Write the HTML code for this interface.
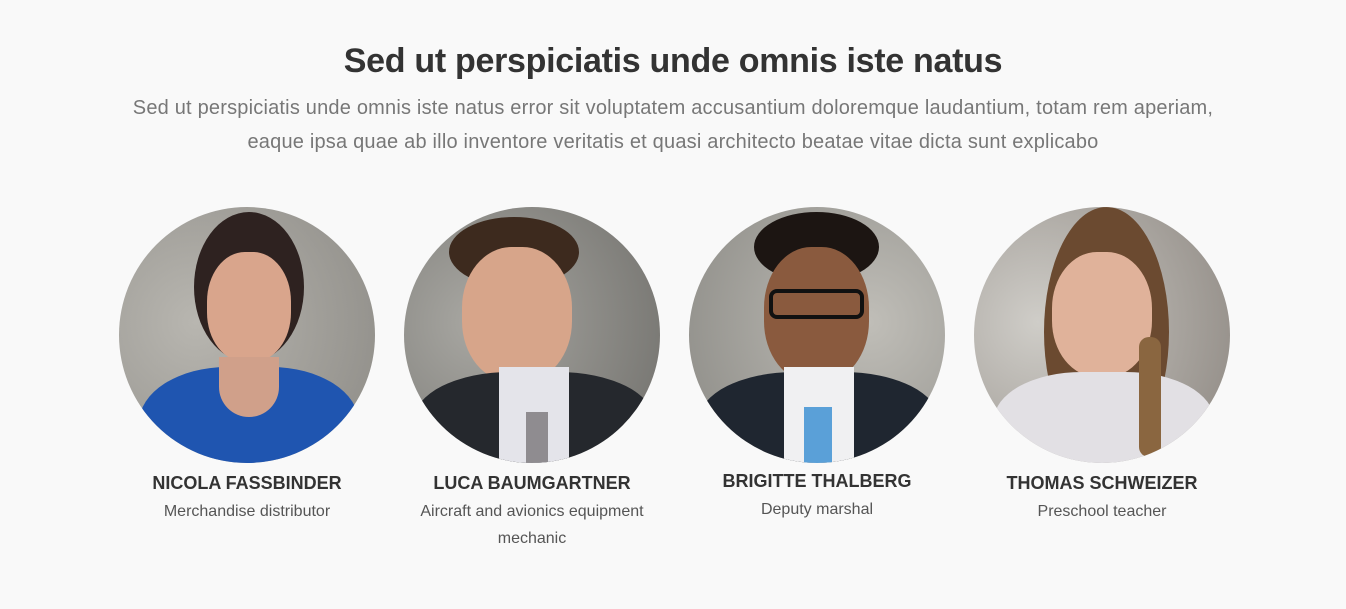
<!DOCTYPE html>
<html><head><meta charset="utf-8"><style>
body{margin:0;width:1346px;height:609px;background:#f9f9f9;font-family:"Liberation Sans",sans-serif;overflow:hidden;position:relative}
h1{position:absolute;top:42px;left:0;width:1346px;text-align:center;margin:0;font-size:34px;font-weight:bold;color:#333;letter-spacing:-0.3px}
.sub{position:absolute;top:91px;left:0;width:1346px;text-align:center;font-size:20px;line-height:34px;color:#777;font-weight:300;white-space:nowrap;letter-spacing:0.2px}
.m{position:absolute;top:207px;width:256px;text-align:center}
.c{width:256px;height:256px;border-radius:50%;position:relative;overflow:hidden}
.c div{position:absolute}
.n{font-size:18px;font-weight:bold;color:#333;margin-top:10px}
.r{font-size:16px;color:#555;line-height:27px;margin-top:4px}
</style></head><body>
<h1>Sed ut perspiciatis unde omnis iste natus</h1>
<div class="sub">Sed ut perspiciatis unde omnis iste natus error sit voluptatem accusantium doloremque laudantium, totam rem aperiam,<br>eaque ipsa quae ab illo inventore veritatis et quasi architecto beatae vitae dicta sunt explicabo</div>

<div class="m" style="left:119px"><div class="c" style="background:radial-gradient(circle at 30% 45%,#b8b6b0,#8c8a85)">
<div style="left:75px;top:5px;width:110px;height:150px;border-radius:50%;background:#2e2220"></div>
<div style="left:88px;top:45px;width:84px;height:110px;border-radius:45%;background:#d9a58c"></div>
<div style="left:20px;top:160px;width:220px;height:140px;border-radius:40% 40% 0 0;background:#1f55b0"></div>
<div style="left:100px;top:150px;width:60px;height:60px;border-radius:0 0 50% 50%;background:#d0a08a"></div>
</div><div class="n">NICOLA FASSBINDER</div><div class="r">Merchandise distributor</div></div>

<div class="m" style="left:404px"><div class="c" style="background:radial-gradient(circle at 30% 45%,#a9a8a3,#6f6e6a)">
<div style="left:45px;top:10px;width:130px;height:70px;border-radius:50%;background:#3d2a1e"></div>
<div style="left:58px;top:40px;width:110px;height:135px;border-radius:45%;background:#d7a58a"></div>
<div style="left:10px;top:165px;width:240px;height:120px;border-radius:40% 40% 0 0;background:#25282d"></div>
<div style="left:95px;top:160px;width:70px;height:100px;background:#e4e4ea"></div>
<div style="left:122px;top:205px;width:22px;height:60px;background:#8f8c90"></div>
</div><div class="n">LUCA BAUMGARTNER</div><div class="r">Aircraft and avionics equipment<br>mechanic</div></div>

<div class="m" style="left:689px"><div class="c" style="background:radial-gradient(circle at 70% 45%,#c0beb8,#8a8984)">
<div style="left:65px;top:5px;width:125px;height:70px;border-radius:50%;background:#1c1512"></div>
<div style="left:75px;top:40px;width:105px;height:135px;border-radius:45%;background:#8a5a3e"></div>
<div style="left:80px;top:82px;width:95px;height:30px;border:4px solid #111;border-radius:8px;box-sizing:border-box"></div>
<div style="left:10px;top:165px;width:240px;height:120px;border-radius:40% 40% 0 0;background:#1f2630"></div>
<div style="left:95px;top:160px;width:70px;height:100px;background:#f0f0f2"></div>
<div style="left:115px;top:200px;width:28px;height:60px;background:#5aa0d8"></div>
</div><div class="n" style="margin-top:8px">BRIGITTE THALBERG</div><div class="r">Deputy marshal</div></div>

<div class="m" style="left:974px"><div class="c" style="background:radial-gradient(circle at 25% 45%,#cfcdc8,#8c8680)">
<div style="left:70px;top:0px;width:125px;height:250px;border-radius:50%;background:#6b4a30"></div>
<div style="left:78px;top:45px;width:100px;height:125px;border-radius:45%;background:#e0b29a"></div>
<div style="left:20px;top:165px;width:220px;height:120px;border-radius:40% 40% 0 0;background:#e2e0e4"></div>
<div style="left:165px;top:130px;width:22px;height:120px;border-radius:10px;background:#8a6640"></div>
</div><div class="n">THOMAS SCHWEIZER</div><div class="r">Preschool teacher</div></div>
</body></html>
